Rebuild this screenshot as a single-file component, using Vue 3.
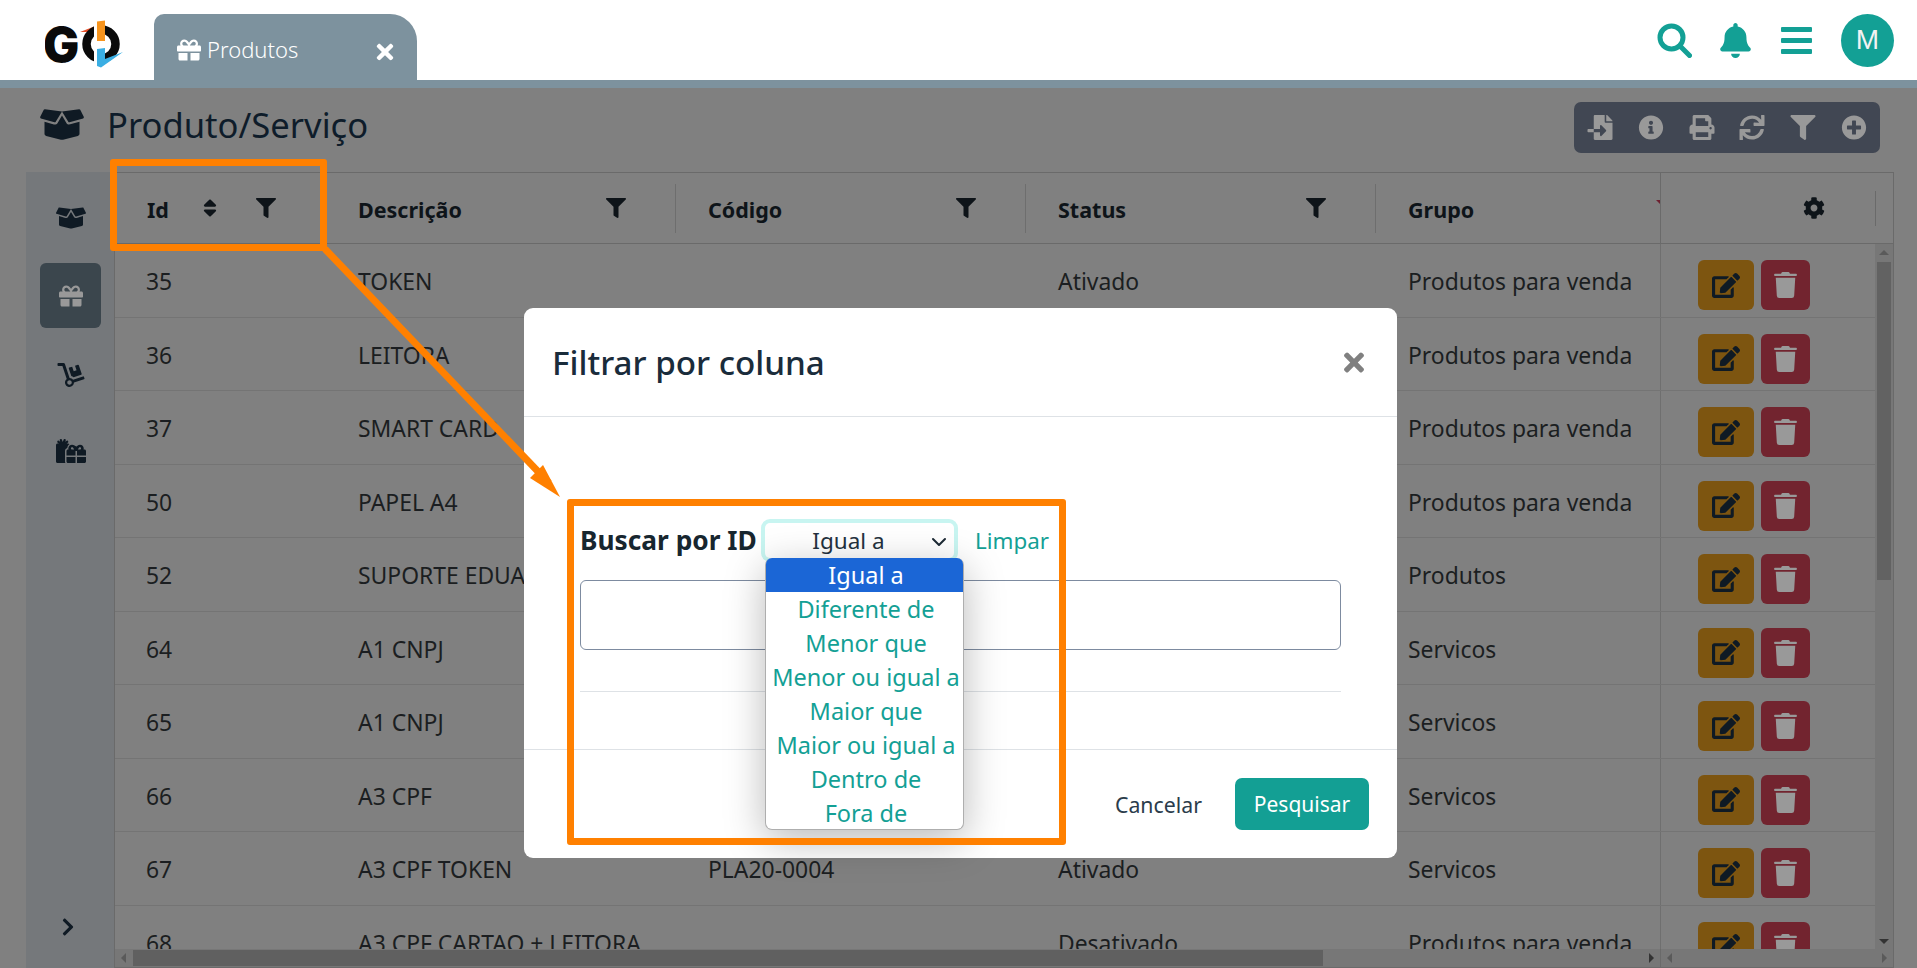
<script setup>
import { h } from 'vue'

const paths = {
  gift: [512, 'M32 448c0 17.7 14.3 32 32 32h160V320H32v128zm256 32h160c17.7 0 32-14.3 32-32V320H288v160zm192-320h-42.1c6.2-12.1 10.1-25.5 10.1-40 0-48.5-39.5-88-88-88-41.6 0-68.5 21.3-103 68.3-34.5-47-61.4-68.3-103-68.3-48.5 0-88 39.5-88 88 0 14.5 3.8 27.9 10.1 40H32c-17.7 0-32 14.3-32 32v80c0 8.8 7.2 16 16 16h480c8.8 0 16-7.2 16-16v-80c0-17.7-14.3-32-32-32zm-326.1 0c-22.1 0-40-17.9-40-40s17.9-40 40-40c19.9 0 34.6 3.3 86.1 80h-86.1zm206.1 0h-86.1c51.4-76.5 65.7-80 86.1-80 22.1 0 40 17.9 40 40s-17.9 40-40 40z'],
  box: [640, 'M425.7 256c-16.9 0-32.8-9-41.4-23.4L320 126l-64.2 106.6c-8.7 14.5-24.6 23.5-41.5 23.5-4.5 0-9-.6-13.3-1.9L64 215v178c0 14.7 10 27.5 24.2 31l216.2 54.1c10.2 2.5 20.9 2.5 31 0L551.8 424c14.2-3.6 24.2-16.4 24.2-31V215l-137 39.1c-4.3 1.3-8.8 1.9-13.3 1.9zm212.6-112.2L586.8 41c-3.1-6.2-9.8-9.8-16.7-8.9L320 64l91.7 152.1c3.8 6.3 11.4 9.3 18.5 7.3l197.9-56.5c9.9-2.9 14.7-13.9 10.2-23.1zM53.2 41L1.7 143.8c-4.6 9.2.3 20.2 10.1 23l197.9 56.5c7.1 2 14.7-1 18.5-7.3L320 64 69.8 32.1c-6.9-.8-13.5 2.7-16.6 8.9z'],
  dolly: [576, 'M294.2 277.7c18 5 34.7 13.4 49.5 24.7l161.5-53.8c8.4-2.8 12.9-11.9 10.1-20.2L454.9 47.2c-2.8-8.4-11.9-12.9-20.2-10.1l-61.1 20.4 33.1 99.4L346 177l-33.1-99.4-61.6 20.5c-8.4 2.8-12.9 11.9-10.1 20.2l53 159.4zm281 48.7L565 296c-2.8-8.4-11.9-12.9-20.2-10.1l-213.5 71.2c-17.2-22-43.6-36.4-73.5-37L158.4 21.9C154 8.8 141.8 0 128 0H16C7.2 0 0 7.2 0 16v32c0 8.8 7.2 16 16 16h88.9l92.2 276.7c-26.1 20.4-41.7 53.6-36 90.5 6.1 39.4 37.9 72.3 77.3 79.2 60.2 10.7 112.3-34.8 113.4-92.6l213.3-71.2c8.3-2.8 12.9-11.8 10.1-20.2zM256 464c-26.5 0-48-21.5-48-48s21.5-48 48-48 48 21.5 48 48-21.5 48-48 48z'],
  gifts: [640, 'M240.6 194.1c1.9-30.8 17.3-61.2 44-79.8C279.4 103.5 268.7 96 256 96h-29.4l30.7-22c7.2-5.1 8.9-15.1 3.7-22.3l-9.3-13c-5.1-7.2-15.1-8.9-22.3-3.7l-32 22.9 11.5-30.6c3.1-8.3-1.1-17.5-9.4-20.6l-15-5.6c-8.3-3.1-17.5 1.1-20.6 9.4l-19.9 53-19.9-53.1C121 2.1 111.8-2.1 103.5 1l-15 5.6C80.2 9.7 76 19 79.2 27.2l11.5 30.6L58.6 35c-7.2-5.1-17.2-3.5-22.3 3.7l-9.3 13c-5.1 7.2-3.5 17.2 3.7 22.3l30.7 22H32c-17.7 0-32 14.3-32 32v352c0 17.7 14.3 32 32 32h168.9c-5.5-9.5-8.9-20.3-8.9-32V256c0-29.9 20.8-55 48.6-61.9zM224 480c0 17.7 14.3 32 32 32h160V384H224v96zm224 32h160c17.7 0 32-14.3 32-32v-96H448v128zm160-288h-20.4c2.3-7.6 4.4-15.3 4.4-23.5 0-44.4-36-80.5-80.5-80.5-30 0-55 16-72.5 42.3C398 136 373 120 343 120c-44.4 0-80.5 36.1-80.5 80.5 0 8.2 2 15.9 4.4 23.5H256c-17.7 0-32 14.3-32 32v96h192v-96h32v96h192v-96c0-17.7-14.3-32-32-32zm-265 0c-13.1 0-23.5-10.4-23.5-23.5s10.4-23.5 23.5-23.5c12 0 21 4 44 47h-44zm168 0h-44c23-43 32-47 44-47 13.1 0 23.5 10.4 23.5 23.5S524.1 224 511 224z'],
  bell: [448, 'M224 512c35.32 0 63.97-28.65 63.97-64H160.03c0 35.35 28.65 64 63.97 64zm215.39-149.71c-19.32-20.76-55.47-51.99-55.47-154.29 0-77.7-54.48-139.9-127.94-155.16V32c0-17.67-14.32-32-31.98-32s-31.98 14.33-31.98 32v20.84C118.56 68.1 64.08 130.3 64.08 208c0 102.3-36.15 133.53-55.47 154.29-6 6.45-8.66 14.16-8.61 21.71.11 16.4 12.98 32 32.1 32h383.8c19.12 0 32-15.6 32.1-32 .05-7.55-2.61-15.27-8.61-21.71z'],
  fileImport: [512, 'M16 288c-8.8 0-16 7.2-16 16v32c0 8.8 7.2 16 16 16h112v-64zm489-183L407.1 7c-4.5-4.5-10.6-7-17-7H384v128h128v-6.1c0-6.3-2.5-12.4-7-16.9zm-153 31V0H152c-13.3 0-24 10.7-24 24v264h128v-65.2c0-14.3 17.3-21.4 27.4-11.3L379 308c6.6 6.7 6.6 17.4 0 24l-95.7 96.4c-10.1 10.1-27.4 3-27.4-11.3V352H128v136c0 13.3 10.7 24 24 24h336c13.3 0 24-10.7 24-24V160H376c-13.2 0-24-10.8-24-24z'],
  info: [512, 'M256 8C119 8 8 119.1 8 256c0 137 111 248 248 248s248-111 248-248C504 119.1 393 8 256 8zm0 110c23.2 0 42 18.8 42 42s-18.8 42-42 42-42-18.8-42-42 18.8-42 42-42zm56 254c0 6.6-5.4 12-12 12h-88c-6.6 0-12-5.4-12-12v-24c0-6.6 5.4-12 12-12h12v-64h-12c-6.6 0-12-5.4-12-12v-24c0-6.6 5.4-12 12-12h64c6.6 0 12 5.4 12 12v100h12c6.6 0 12 5.4 12 12v24z'],
  print: [512, 'M448 192V77.25c0-8.49-3.37-16.62-9.37-22.63L393.37 9.37c-6-6-14.14-9.37-22.63-9.37H96C78.33 0 64 14.33 64 32v160c-35.35 0-64 28.65-64 64v112c0 8.84 7.16 16 16 16h48v96c0 17.67 14.33 32 32 32h320c17.67 0 32-14.33 32-32v-96h48c8.84 0 16-7.16 16-16V256c0-35.35-28.65-64-64-64zm-64 256H128v-96h256v96zm0-224H128V64h192v48c0 8.84 7.16 16 16 16h48v96zm48 72c-13.25 0-24-10.75-24-24 0-13.26 10.75-24 24-24s24 10.74 24 24c0 13.25-10.75 24-24 24z'],
  sync: [512, 'M440.65 12.57l4 82.77A247.16 247.16 0 0 0 255.83 8C134.73 8 33.91 94.92 12.29 209.82A12 12 0 0 0 24.09 224h49.05a12 12 0 0 0 11.67-9.26 175.91 175.91 0 0 1 317-56.94l-101.46-4.86a12 12 0 0 0-12.57 12v47.41a12 12 0 0 0 12 12H500a12 12 0 0 0 12-12V12a12 12 0 0 0-12-12h-47.37a12 12 0 0 0-11.98 12.57zM255.83 432a175.61 175.61 0 0 1-146-77.8l101.8 4.87a12 12 0 0 0 12.57-12v-47.4a12 12 0 0 0-12-12H12a12 12 0 0 0-12 12V500a12 12 0 0 0 12 12h47.35a12 12 0 0 0 12-12.6l-4.15-82.57A247.17 247.17 0 0 0 255.83 504c121.11 0 221.93-86.92 243.55-201.82a12 12 0 0 0-11.8-14.18h-49.05a12 12 0 0 0-11.67 9.26A175.86 175.86 0 0 1 255.83 432z'],
  filter: [512, 'M487.976 0H24.028C2.71 0-8.047 25.866 7.058 40.971L192 225.941V432c0 7.831 3.821 15.17 10.237 19.662l80 55.98C298.02 518.69 320 507.493 320 487.98V225.941l184.947-184.97C520.021 25.896 509.338 0 487.976 0z'],
  plus: [512, 'M256 8C119 8 8 119 8 256s111 248 248 248 248-111 248-248S393 8 256 8zm144 276c0 6.6-5.4 12-12 12h-92v92c0 6.6-5.4 12-12 12h-56c-6.6 0-12-5.4-12-12v-92h-92c-6.6 0-12-5.4-12-12v-56c0-6.6 5.4-12 12-12h92v-92c0-6.6 5.4-12 12-12h56c6.6 0 12 5.4 12 12v92h92c6.6 0 12 5.4 12 12v56z'],
  sort: [320, 'M41 288h238c21.4 0 32.1 25.9 17 41L177 448c-9.4 9.4-24.6 9.4-33.9 0L24 329c-15.1-15.1-4.4-41 17-41zm255-105L177 64c-9.4-9.4-24.6-9.4-33.9 0L24 183c-15.1 15.1-4.4 41 17 41h238c21.4 0 32.1-25.9 17-41z'],
  cog: [512, 'M487.4 315.7l-42.6-24.6c4.3-23.2 4.3-47 0-70.2l42.6-24.6c4.9-2.8 7.1-8.6 5.5-14-11.1-35.6-30-67.8-54.7-94.6-3.8-4.1-10-5.1-14.8-2.3L380.8 110c-17.9-15.4-38.5-27.3-60.8-35.1V25.8c0-5.6-3.9-10.5-9.4-11.7-36.7-8.2-74.3-7.8-109.2 0-5.5 1.2-9.4 6.1-9.4 11.7V75c-22.2 7.9-42.8 19.8-60.8 35.1L88.7 85.5c-4.9-2.8-11-1.9-14.8 2.3-24.7 26.7-43.6 58.9-54.7 94.6-1.7 5.4.6 11.2 5.5 14L67.3 221c-4.3 23.2-4.3 47 0 70.2l-42.6 24.6c-4.9 2.8-7.1 8.6-5.5 14 11.1 35.6 30 67.8 54.7 94.6 3.8 4.1 10 5.1 14.8 2.3l42.6-24.6c17.9 15.4 38.5 27.3 60.8 35.1v49.2c0 5.6 3.9 10.5 9.4 11.7 36.7 8.2 74.3 7.8 109.2 0 5.5-1.2 9.4-6.1 9.4-11.7v-49.2c22.2-7.9 42.8-19.8 60.8-35.1l42.6 24.6c4.9 2.8 11 1.9 14.8-2.3 24.7-26.7 43.6-58.9 54.7-94.6 1.5-5.5-.7-11.3-5.6-14.1zM256 336c-44.1 0-80-35.9-80-80s35.9-80 80-80 80 35.9 80 80-35.9 80-80 80z'],
  edit: [576, 'M402.6 83.2l90.2 90.2c3.8 3.8 3.8 10 0 13.8L274.4 405.6l-92.8 10.3c-12.4 1.4-22.9-9.1-21.5-21.5l10.3-92.8L388.8 83.2c3.8-3.8 10-3.8 13.8 0zm162-22.9l-48.8-48.8c-15.2-15.2-39.9-15.2-55.2 0l-35.4 35.4c-3.8 3.8-3.8 10 0 13.8l90.2 90.2c3.8 3.8 10 3.8 13.8 0l35.4-35.4c15.2-15.3 15.2-40 0-55.2zM384 346.2V448H64V128h229.8c3.2 0 6.2-1.3 8.5-3.5l40-40c7.6-7.6 2.2-20.5-8.5-20.5H48C21.5 64 0 85.5 0 112v352c0 26.5 21.5 48 48 48h352c26.5 0 48-21.5 48-48V306.2c0-10.7-12.9-16-20.5-8.5l-40 40c-2.2 2.3-3.5 5.3-3.5 8.5z'],
  trash: [448, 'M432 32H312l-9.4-18.7A24 24 0 0 0 281.1 0H166.8a23.72 23.72 0 0 0-21.4 13.3L136 32H16A16 16 0 0 0 0 48v16a16 16 0 0 0 16 16h416a16 16 0 0 0 16-16V48a16 16 0 0 0-16-16zM53.2 467a48 48 0 0 0 47.9 45h245.8a48 48 0 0 0 47.9-45L416 112H32z'],
  chevron: [320, 'M285.476 272.971L91.132 467.314c-9.373 9.373-24.569 9.373-33.941 0l-22.667-22.667c-9.357-9.357-9.375-24.522-.04-33.901L188.505 256 34.484 101.255c-9.335-9.379-9.317-24.544.04-33.901l22.667-22.667c9.373-9.373 24.569-9.373 33.941 0L285.475 239.03c9.373 9.372 9.373 24.568.001 33.941z'],
  times: [352, 'M242.72 256l100.07-100.07c12.28-12.28 12.28-32.19 0-44.48l-22.24-22.24c-12.28-12.28-32.19-12.28-44.48 0L176 189.28 75.93 89.21c-12.28-12.28-32.19-12.28-44.48 0L9.21 111.45c-12.28 12.28-12.28 32.19 0 44.48L109.28 256 9.21 356.07c-12.28 12.28-12.28 32.19 0 44.48l22.24 22.24c12.28 12.28 32.2 12.28 44.48 0L176 322.72l100.07 100.07c12.28 12.28 32.2 12.28 44.48 0l22.24-22.24c12.28-12.28 12.28-32.19 0-44.48L242.72 256z'],
}

const Icon = (props) => {
  const [w, d] = paths[props.n]
  return h('svg', { viewBox: `0 0 ${w} 512`, fill: 'currentColor' }, [h('path', { d })])
}
Icon.props = ['n']

const toolbar = ['fileImport', 'info', 'print', 'sync', 'filter', 'plus']
const nav = [
  { icon: 'box' },
  { icon: 'gift', active: true },
  { icon: 'dolly' },
  { icon: 'gifts' },
]
const columns = ['Descrição', 'Código', 'Status']
const rows = [
  ['35', 'TOKEN', '', 'Ativado', 'Produtos para venda'],
  ['36', 'LEITORA', '', 'Ativado', 'Produtos para venda'],
  ['37', 'SMART CARD', '', 'Ativado', 'Produtos para venda'],
  ['50', 'PAPEL A4', '', 'Ativado', 'Produtos para venda'],
  ['52', 'SUPORTE EDUARDO', '', 'Ativado', 'Produtos'],
  ['64', 'A1 CNPJ', '', 'Ativado', 'Servicos'],
  ['65', 'A1 CNPJ', '', 'Ativado', 'Servicos'],
  ['66', 'A3 CPF', '', 'Ativado', 'Servicos'],
  ['67', 'A3 CPF TOKEN', 'PLA20-0004', 'Ativado', 'Servicos'],
  ['68', 'A3 CPF CARTAO + LEITORA', '', 'Desativado', 'Produtos para venda'],
]
const options = ['Igual a', 'Diferente de', 'Menor que', 'Menor ou igual a', 'Maior que', 'Maior ou igual a', 'Dentro de', 'Fora de']
</script>

<template>
  <div class="app">
    <header class="topbar">
      <div class="brand">
        <svg class="logo" viewBox="0 0 90 56" width="90" height="56">
          <text x="-2" y="46" class="logo-g">G</text>
          <path d="M35 16 L53 9 L53 16 Z" fill="#e8502a" />
          <circle cx="56" cy="28" r="14.5" fill="none" stroke="#0a0a0a" stroke-width="8.5" />
          <rect x="49" y="4" width="11" height="22" fill="#fff" />
          <path d="M52 5.5 L60 4.5 L60 25 L52 25 Z" fill="#f7941d" />
          <rect x="49" y="32" width="11" height="20" fill="#fff" />
          <path d="M52 33 L60 32 L60 43 L78 36 L56 51.5 L52 50 Z" fill="#3aaee3" />
        </svg>
      </div>
      <div class="tab">
        <Icon n="gift" class="tab-gift" />
        <span class="tab-label">Produtos</span>
        <Icon n="times" class="tab-close" />
      </div>
      <div class="top-actions">
        <svg class="top-search" viewBox="0 0 35 35" fill="none" stroke="#13a095">
          <circle cx="14.5" cy="14.5" r="11.5" stroke-width="5" />
          <path d="M23 23 L32.5 32.5" stroke-width="5" stroke-linecap="round" />
        </svg>
        <Icon n="bell" class="top-bell" />
        <div class="top-bars"><i></i><i></i><i></i></div>
        <div class="avatar">M</div>
      </div>
    </header>
    <div class="band"></div>

    <main class="page">
      <div class="title-row">
        <Icon n="box" class="title-icon" />
        <h1 class="title">Produto/Serviço</h1>
        <div class="toolbar">
          <Icon v-for="t in toolbar" :key="t" :n="t" class="tool" />
        </div>
      </div>

      <div class="panel">
        <aside class="sidebar">
          <div v-for="item in nav" :key="item.icon" class="nav-item" :class="{ active: item.active }">
            <Icon :n="item.icon" class="nav-icon" />
          </div>
          <Icon n="chevron" class="nav-expand" />
        </aside>

        <section class="table">
          <div class="thead">
            <div class="th th-id">
              <span>Id</span>
              <Icon n="sort" class="sort-icon" />
              <Icon n="filter" class="filter-icon filter-id" />
            </div>
            <div v-for="c in columns" :key="c" class="th th-sep">
              <span>{{ c }}</span>
              <Icon n="filter" class="filter-icon" />
            </div>
            <div class="th th-group">
              <span>Grupo</span>
              <i class="cut-mark"></i>
            </div>
            <div class="th th-actions">
              <Icon n="cog" class="cog" />
              <i class="last-sep"></i>
            </div>
          </div>

          <div class="tbody">
            <div class="rows">
              <div v-for="r in rows" :key="r[0]" class="tr">
                <div class="td td-id">{{ r[0] }}</div>
                <div class="td">{{ r[1] }}</div>
                <div class="td">{{ r[2] }}</div>
                <div class="td">{{ r[3] }}</div>
                <div class="td">{{ r[4] }}</div>
                <div class="td-actions">
                  <div class="btn-edit"><Icon n="edit" class="edit-icon" /></div>
                  <div class="btn-del"><Icon n="trash" class="del-icon" /></div>
                </div>
              </div>
            </div>
            <div class="vscroll">
              <i class="arrow-up"></i>
              <div class="vthumb"></div>
              <i class="arrow-down"></i>
            </div>
          </div>

          <div class="hscrolls">
            <div class="hscroll hscroll-main">
              <i class="arrow-left"></i>
              <div class="hthumb"></div>
              <i class="arrow-right"></i>
            </div>
            <div class="hscroll hscroll-side">
              <i class="arrow-left"></i>
              <i class="arrow-right"></i>
            </div>
          </div>
        </section>
      </div>
    </main>

    <div class="modal">
      <div class="modal-head">
        <h2 class="modal-title">Filtrar por coluna</h2>
        <Icon n="times" class="modal-close" />
      </div>
      <div class="modal-body">
        <div class="filter-row">
          <label class="filter-label">Buscar por ID</label>
          <div class="select">
            <span>Igual a</span>
            <svg class="select-chevron" viewBox="0 0 16 16" fill="none" stroke="#1d2a35" stroke-width="2" stroke-linecap="round" stroke-linejoin="round"><path d="M2 5l6 6 6-6" /></svg>
          </div>
          <a class="clear">Limpar</a>
        </div>
        <div class="input"></div>
        <hr class="divider" />
      </div>
      <div class="modal-foot">
        <a class="cancel">Cancelar</a>
        <button class="search-btn">Pesquisar</button>
      </div>

      <ul class="dropdown">
        <li v-for="(o, i) in options" :key="o" :class="{ selected: i === 0 }">{{ o }}</li>
      </ul>
    </div>

    <div class="mark mark-id"></div>
    <div class="mark mark-filter"></div>
    <svg class="callout" viewBox="0 0 1917 968" width="1917" height="968">
      <path d="M325 249 L549 483" stroke="#ff8000" stroke-width="7" fill="none" />
      <path d="M560 497 L543 465 L530 478 Z" fill="#ff8000" />
    </svg>
  </div>
</template>

<style>
html, body { margin: 0; padding: 0; background: #808080; }
</style>

<style scoped>
.app {
  position: relative;
  width: 1917px;
  height: 968px;
  overflow: hidden;
  background: #808080;
  font-family: "Noto Sans", "Open Sans", sans-serif;
  color: #1b1e21;
}
svg { display: block; }

.topbar { height: 80px; background: #fff; display: flex; align-items: flex-end; }
.band { height: 8px; background: #7d929e; }
.brand { width: 154px; height: 80px; flex: none; padding: 16px 0 0 45px; box-sizing: border-box; }
.logo-g { font-family: Inter, "Liberation Sans", sans-serif; font-weight: 900; font-size: 48px; fill: #0a0a0a; }
.tab {
  width: 263px; height: 66px; flex: none; box-sizing: border-box;
  background: #7d929e; color: #fff;
  border-radius: 10px 27px 0 0;
  display: flex; align-items: center; padding: 0 23px 0 23px;
}
.tab-gift { width: 24px; height: 24px; margin-right: 6px; margin-top: 5px; }
.tab-label { font-size: 22px; font-weight: 300; flex: 1; margin-top: 4px; }
.tab-close { width: 18px; height: 24px; margin-top: 10px; }
.top-actions { margin-left: auto; height: 80px; display: flex; align-items: center; padding-right: 23px; }
.top-search { width: 35px; height: 35px; margin-top: 1px; }
.top-bell { width: 31px; height: 35px; color: #13a095; margin-left: 28px; margin-top: 1px; }
.top-bars { width: 31px; margin-left: 30px; display: flex; flex-direction: column; gap: 6px; }
.top-bars i { display: block; height: 5px; background: #13a095; border-radius: 1px; }
.avatar {
  width: 53px; height: 53px; border-radius: 50%; margin-left: 29px;
  background: #13a095; color: #f2f2f2;
  display: flex; align-items: center; justify-content: center;
  font-family: "Liberation Sans", sans-serif; font-size: 28px;
}

.page { height: 880px; display: flex; flex-direction: column; padding-left: 26px; padding-right: 23px; }
.title-row { height: 84px; flex: none; display: flex; align-items: center; margin-right: -9px; box-sizing: border-box; padding: 0 23px 12px 0; }
.title-icon { width: 44px; height: 35px; color: #0f1a24; margin-left: 14px; }
.title { margin: 0 0 0 23px; font-size: 34.6px; font-weight: 400; color: #0e1c2a; }
.toolbar {
  margin-left: auto; margin-top: 7px; width: 306px; height: 51px; box-sizing: border-box;
  background: #414753; border-radius: 7px;
  display: flex; align-items: center; justify-content: space-between; padding: 0 13px 0 13px;
}
.tool { width: 26px; height: 25px; color: #999; }

.panel { flex: 1; min-height: 0; display: flex; }
.sidebar { width: 88px; flex: none; background: #75787b; position: relative; padding-top: 28px; box-sizing: border-box; }
.nav-item { width: 61px; height: 65px; margin: 0 0 12px 14px; border-radius: 6px; display: flex; align-items: center; justify-content: center; color: #0f1a24; }
.nav-item:first-child { height: 36px; margin-bottom: 27px; }
.nav-item:nth-child(3) { height: 36px; margin-bottom: 40px; margin-top: 29px; }
.nav-item:nth-child(4) { height: 36px; }
.nav-item.active { background: #3b464d; color: #999; }
.nav-icon { width: 30px; height: 24px; }
.nav-expand { position: absolute; left: 30px; bottom: 31px; width: 24px; height: 20px; color: #0f1a24; }

.table { width: 1780px; flex: none; box-sizing: border-box; border: 1px solid #6a6a6a; display: flex; flex-direction: column; }
.thead { height: 70px; flex: none; display: grid; grid-template-columns: 211px 350px 350px 350px 284px 234px; border-bottom: 1px solid #6a6a6a; box-sizing: content-box; }
.th { position: relative; display: flex; align-items: center; padding: 2px 0 0 32px; font-size: 21.5px; font-weight: 700; color: #0e1419; }
.th-sep::after { content: ""; position: absolute; right: 0; top: 11px; height: 49px; width: 1px; background: #6e6e6e; }
.sort-icon { width: 14px; height: 22px; margin-left: 34px; margin-top: -2px; }
.filter-icon { position: absolute; right: 50px; top: 25px; width: 20px; height: 20px; }
.filter-id { right: auto; left: 141px; }
.cut-mark { position: absolute; right: 0; top: 27px; border: 2px solid transparent; border-top-color: #6e2030; border-right-color: #6e2030; }
.th-actions { border-left: 1px solid #6a6a6a; padding-left: 0; }
.cog { position: absolute; left: 142px; top: 24px; width: 22px; height: 22px; color: #0e1419; }
.last-sep { position: absolute; left: 214px; top: 18px; height: 35px; width: 1px; background: #6a6a6a; }

.tbody { height: 705px; flex: none; display: flex; overflow: hidden; }
.rows { flex: 1; min-width: 0; }
.tr { height: 73.5px; box-sizing: border-box; display: grid; grid-template-columns: 211px 350px 350px 350px 284px 216px; border-bottom: 1.5px solid #747474; }
.td { padding: 3px 0 0 32px; display: flex; align-items: center; font-size: 22.9px; color: #1b1e21; white-space: nowrap; font-weight: 400; }
.td-id { padding-left: 31px; }
.td-actions { border-left: 1px solid #6f6f6f; display: flex; padding: 16px 0 0 37px; gap: 7px; }
.btn-edit { width: 56px; height: 50px; border-radius: 6px; background: #7d5510; display: flex; align-items: center; justify-content: center; }
.btn-del { width: 49px; height: 50px; border-radius: 6px; background: #72242f; display: flex; align-items: center; justify-content: center; }
.edit-icon { width: 28px; height: 25px; color: #0f1a24; }
.del-icon { width: 23px; height: 26px; color: #999; }

.vscroll { width: 18px; flex: none; background: #777; position: relative; }
.vthumb { position: absolute; left: 2px; top: 18px; width: 14px; height: 318px; background: #626262; }
.arrow-up, .arrow-down, .arrow-left, .arrow-right { position: absolute; width: 0; height: 0; border: 5px solid transparent; }
.arrow-up { left: 4px; top: 1px; border-bottom-color: #5a5a5a; }
.arrow-down { left: 4px; bottom: 0; border-top-color: #333; }
.hscrolls { flex: 1; display: flex; }
.hscroll { position: relative; height: 100%; background: #777; }
.hscroll-main { width: 1545px; }
.hscroll-side { flex: 1; border-left: 1px solid #6a6a6a; }
.hthumb { position: absolute; left: 18px; top: 1px; bottom: 1px; width: 1190px; background: #606060; }
.arrow-left { left: 1px; top: 4px; border-right-color: #5a5a5a; }
.arrow-right { right: 1px; top: 4px; border-left-color: #333; }
.hscroll-side .arrow-right { border-left-color: #5a5a5a; }

.modal {
  position: absolute; left: 524px; top: 308px; width: 873px; height: 550px;
  background: #fff; border-radius: 9px; color: #1c2b39;
  display: flex; flex-direction: column;
}
.modal-head { height: 109px; flex: none; box-sizing: border-box; border-bottom: 1px solid #dee2e6; display: flex; align-items: center; justify-content: space-between; padding: 0 33px 0 28px; }
.modal-title { margin: 0; font-size: 33.2px; font-weight: 500; color: #1a2c3b; }
.modal-close { width: 20px; height: 29px; color: #808080; }
.modal-body { flex: 1; padding: 104px 56px 0; }
.filter-row { display: flex; align-items: center; height: 38px; }
.filter-label { font-size: 26.3px; font-weight: 700; width: 185px; flex: none; color: #17262f; white-space: nowrap; }
.select {
  width: 189px; height: 35px; box-sizing: border-box; background: #fff; position: relative;
  border-radius: 5px; box-shadow: 0 0 0 4px #c8f5f1; display: flex; align-items: center; justify-content: center;
  font-size: 22.5px; padding-right: 22px; color: #24323e;
}
.select-chevron { position: absolute; right: 7px; top: 11px; width: 16px; height: 16px; }
.clear { margin-left: 21px; font-size: 22.4px; color: #13a095; }
.input { height: 70px; box-sizing: border-box; margin-top: 21px; border: 1px solid #7d8ba0; border-radius: 6px; }
.divider { border: 0; border-top: 1px solid #dee2e6; margin: 41px 0 0; }
.modal-foot { height: 109px; flex: none; box-sizing: border-box; border-top: 1px solid #dee2e6; display: flex; align-items: center; justify-content: flex-end; padding: 0 28px 0 0; }
.cancel { font-size: 21.3px; color: #2b3c4b; margin-right: 33px; }
.search-btn { width: 134px; height: 52px; border: 0; border-radius: 7px; background: #139f94; color: #fff; font: 400 21px "Noto Sans", sans-serif; padding: 0; }

.dropdown {
  position: absolute; left: 241px; top: 250px; width: 199px; height: 272px; margin: 0; padding: 0 0 0 3px;
  box-sizing: border-box; list-style: none; background: #fff; border: 1px solid #aeaeae; border-top: 0; border-radius: 7px;
  box-shadow: 0 10px 40px rgba(0, 0, 0, .28); overflow: visible; font-size: 23.5px; color: #13a095; text-align: center;
}
.dropdown li { height: 34px; line-height: 35px; white-space: nowrap; }
.dropdown li.selected { background: #1b66d6; color: #fff; border-radius: 6px 6px 0 0; margin-left: -3px; padding-left: 3px; }

.mark { position: absolute; box-sizing: border-box; border: 7px solid #ff8000; border-radius: 3px; }
.mark-id { left: 110px; top: 159px; width: 217px; height: 92px; }
.mark-filter { left: 567px; top: 499px; width: 499px; height: 346px; }
.callout { position: absolute; left: 0; top: 0; pointer-events: none; }
</style>
